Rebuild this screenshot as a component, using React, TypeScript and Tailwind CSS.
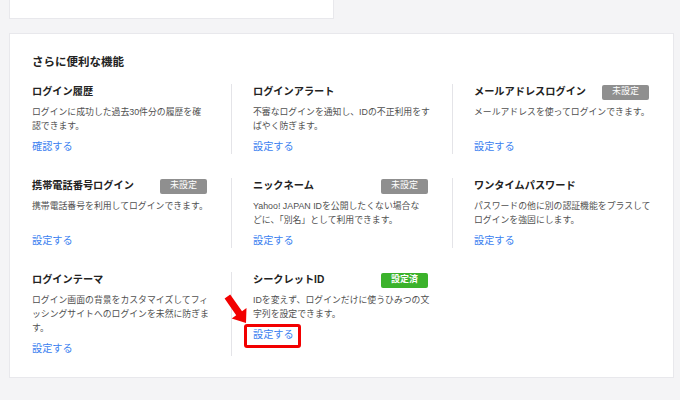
import React from 'react';

type Feature = {
  title: string;
  lines: string[];
  link: string;
  badge?: 'unset' | 'set';
  highlight?: boolean;
};

const FEATURES: Feature[] = [
  {
    title: 'ログイン履歴',
    lines: ['ログインに成功した過去30件分の履歴を確', '認できます。'],
    link: '確認する',
  },
  {
    title: 'ログインアラート',
    lines: ['不審なログインを通知し、IDの不正利用をす', 'ばやく防ぎます。'],
    link: '設定する',
  },
  {
    title: 'メールアドレスログイン',
    lines: ['メールアドレスを使ってログインできます。'],
    link: '設定する',
    badge: 'unset',
  },
  {
    title: '携帯電話番号ログイン',
    lines: ['携帯電話番号を利用してログインできます。'],
    link: '設定する',
    badge: 'unset',
  },
  {
    title: 'ニックネーム',
    lines: ['Yahoo! JAPAN IDを公開したくない場合な', 'どに、「別名」として利用できます。'],
    link: '設定する',
    badge: 'unset',
  },
  {
    title: 'ワンタイムパスワード',
    lines: ['パスワードの他に別の認証機能をプラスして', 'ログインを強固にします。'],
    link: '設定する',
  },
  {
    title: 'ログインテーマ',
    lines: [
      'ログイン画面の背景をカスタマイズしてフィ',
      'ッシングサイトへのログインを未然に防ぎま',
      'す。',
    ],
    link: '設定する',
  },
  {
    title: 'シークレットID',
    lines: ['IDを変えず、ログインだけに使うひみつの文', '字列を設定できます。'],
    link: '設定する',
    badge: 'set',
    highlight: true,
  },
];

function Badge({ kind }: { kind: 'unset' | 'set' }) {
  const set = kind === 'set';
  return (
    <span
      className={
        set
          ? 'flex h-[15px] w-[47px] items-center justify-center rounded-[2px] bg-[#3bb22b] text-[9px] font-bold text-white'
          : 'flex h-[15px] w-[47px] items-center justify-center rounded-[2px] bg-[#8f8f8f] text-[9px] text-white'
      }
    >
      {set ? '設定済' : '未設定'}
    </span>
  );
}

function Arrow() {
  return (
    <svg
      className="absolute -left-[29px] -top-[34px]"
      width="26"
      height="31"
      viewBox="0 0 26 31"
    >
      <polygon
        points="0.6,4.4 12.2,21.2 7.7,24.4 22,29 22.5,14 18,17.2 6.2,0.4"
        fill="#f20000"
      />
    </svg>
  );
}

function FeatureItem({ item, first }: { item: Feature; first: boolean }) {
  return (
    <div
      className={
        first
          ? 'flex flex-col pl-[22px] pr-[24px]'
          : 'flex flex-col border-l border-[#e4e4e8] pl-[21px] pr-[24px]'
      }
    >
      <div className="flex h-[16px] items-center justify-between">
        <h3 className="text-[10.2px] font-bold leading-[16px] text-[#222]">{item.title}</h3>
        {item.badge && <Badge kind={item.badge} />}
      </div>
      <p className="mt-[5px] min-h-[28px] whitespace-nowrap text-[8.85px] leading-[14px] text-[#505050]">
        {item.lines.map((line, i) => (
          <React.Fragment key={i}>
            {i > 0 && <br />}
            {line}
          </React.Fragment>
        ))}
      </p>
      <div className="relative mt-[7px] self-start">
        <a className="block text-[10.2px] leading-[14px] text-[#3b7ff0]">{item.link}</a>
        {item.highlight && (
          <>
            <span className="absolute -bottom-[6px] -left-[9px] -right-[7px] -top-[4px] rounded-[3px] border-[3px] border-[#f20000]" />
            <Arrow />
          </>
        )}
      </div>
    </div>
  );
}

export default function App() {
  return (
    <div className="h-[400px] w-[680px] overflow-hidden bg-[#f4f4f6] font-['Liberation_Sans','Noto_Sans_CJK_JP',sans-serif]">
      <div className="ml-[9px] h-[19px] w-[325px] border-x border-b border-[#e8e8ec] bg-white" />

      <section className="ml-[9px] mt-[14px] w-[665px] border border-[#e8e8ec] bg-white pb-[21px] pt-[20px]">
        <h2 className="pl-[22px] text-[11.5px] font-semibold leading-[16px] text-[#222]">
          さらに便利な機能
        </h2>
        <div className="mt-[14px] grid grid-cols-3 gap-y-[24px]">
          {FEATURES.map((item, i) => (
            <FeatureItem key={item.title} item={item} first={i % 3 === 0} />
          ))}
        </div>
      </section>
    </div>
  );
}
